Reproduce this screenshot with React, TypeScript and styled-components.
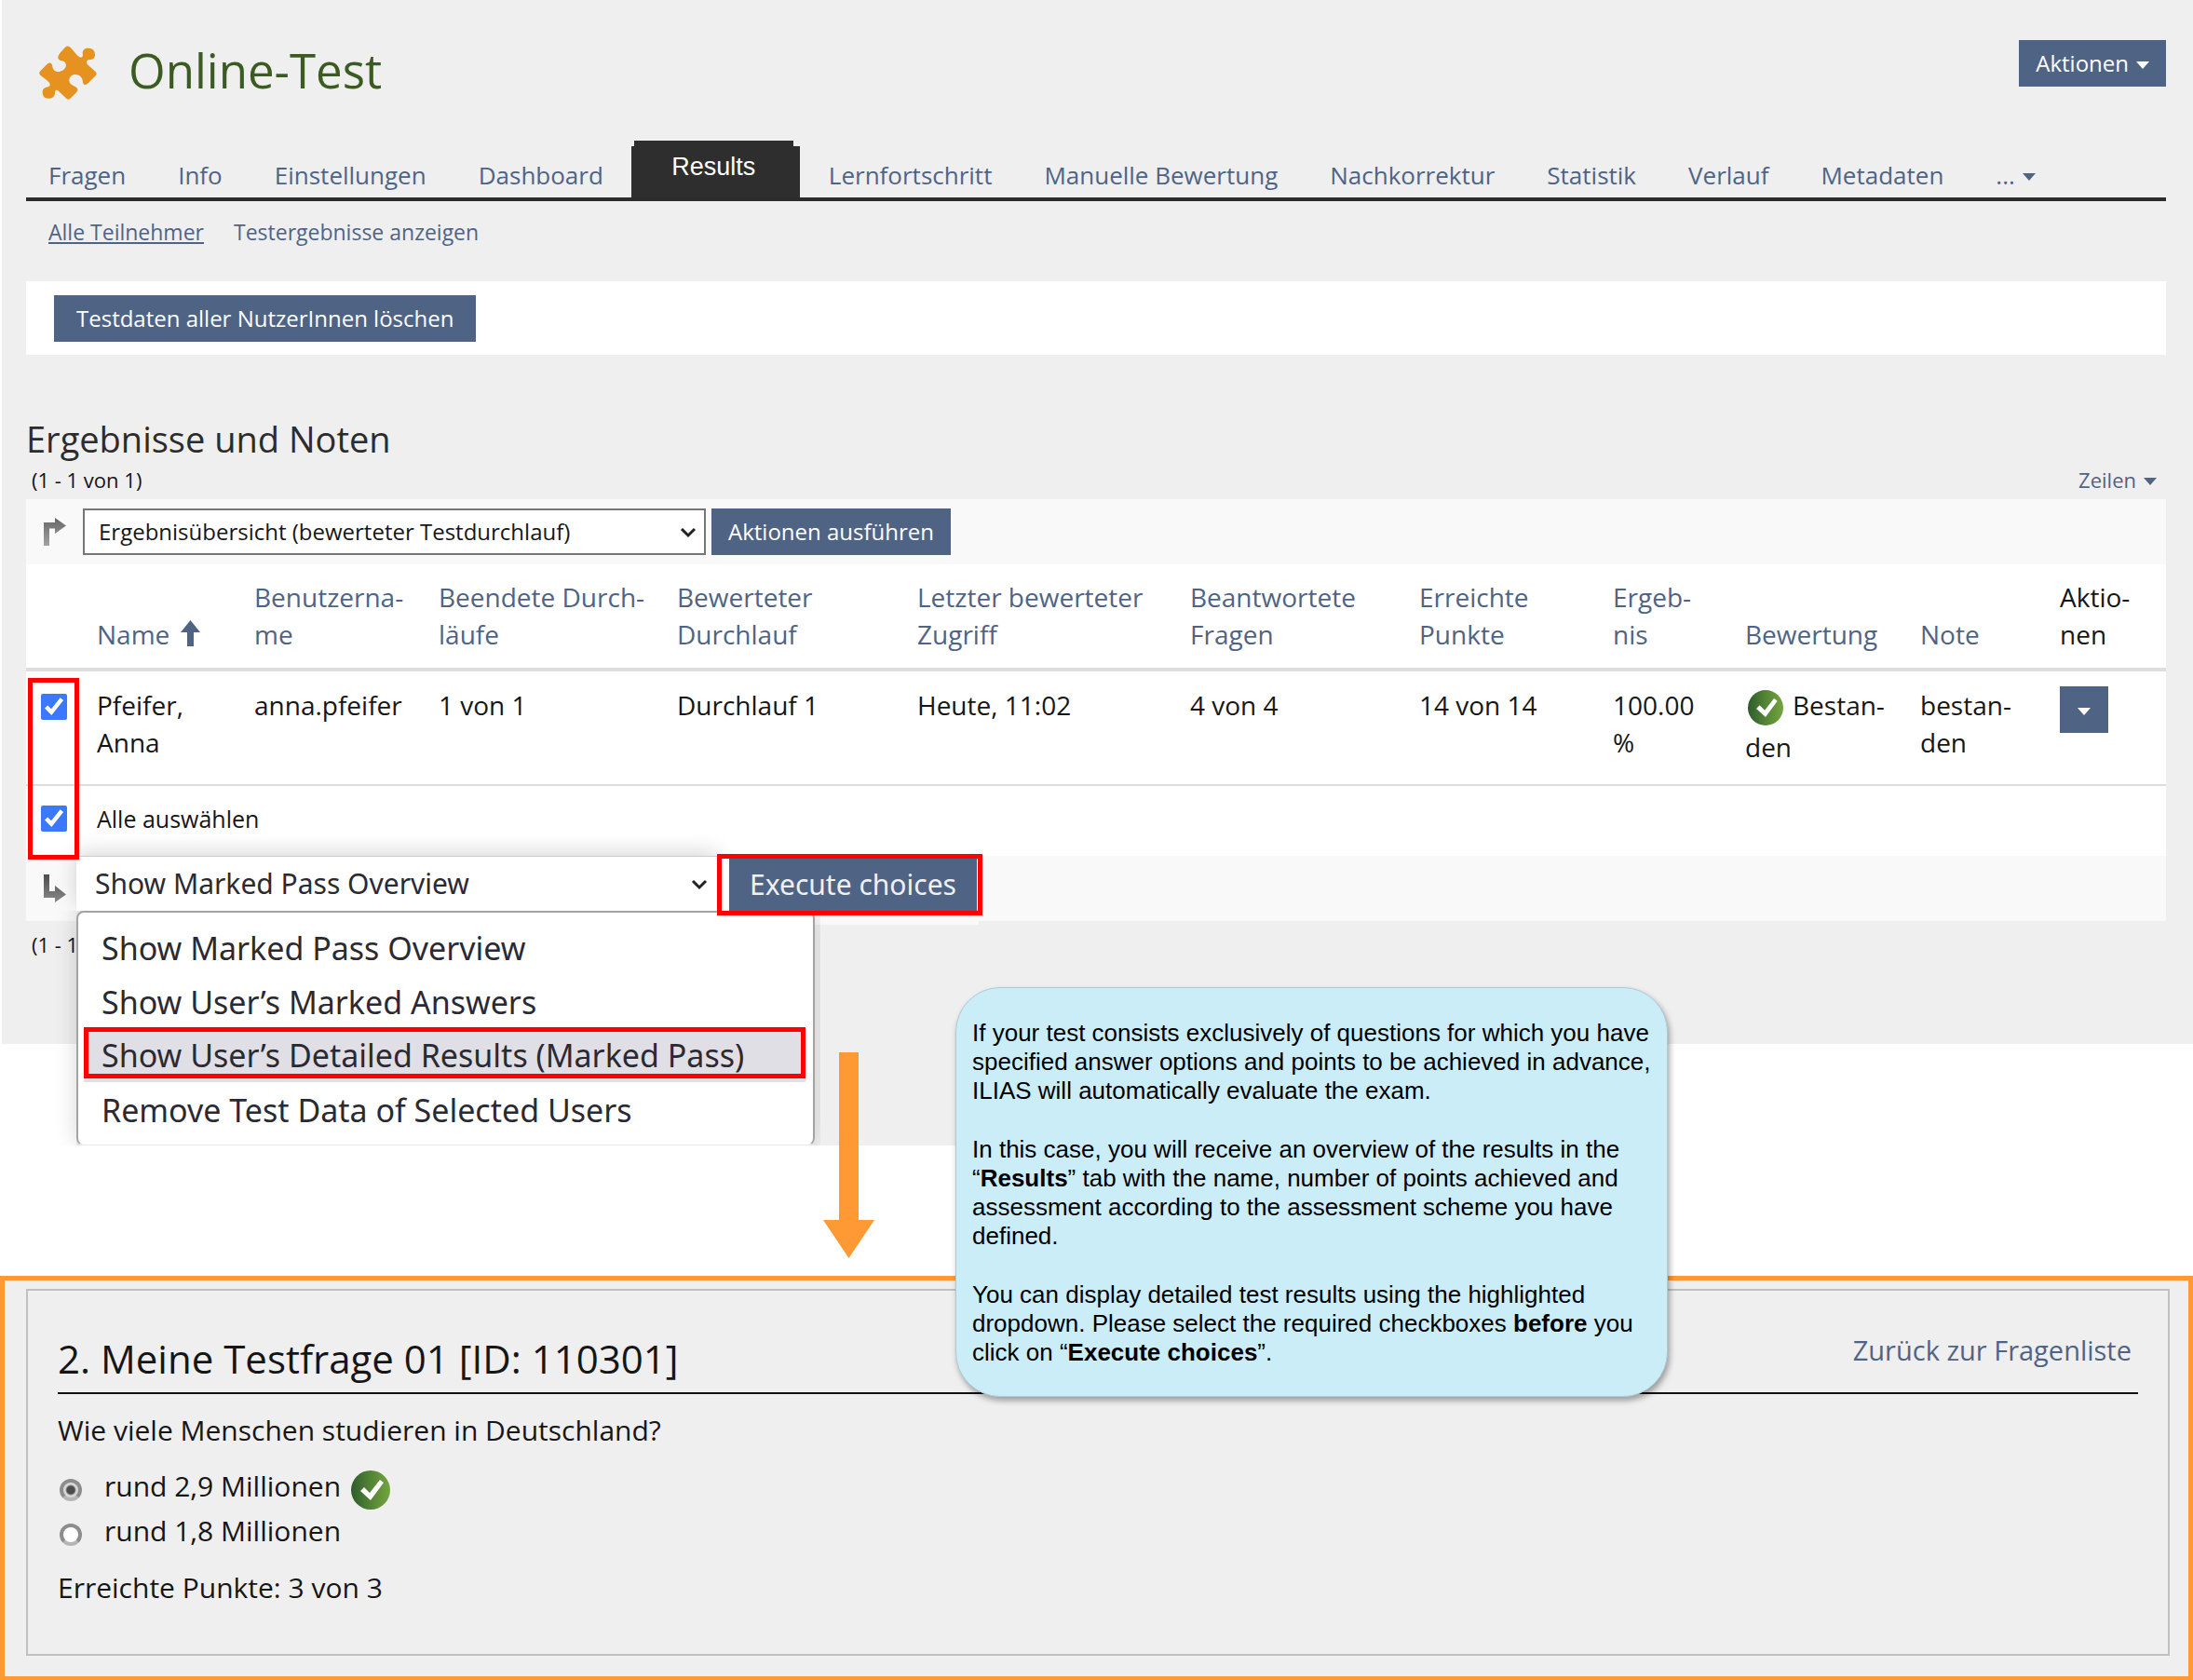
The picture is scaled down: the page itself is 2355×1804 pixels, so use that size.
import React from "react";
import styled, { createGlobalStyle } from "styled-components";

const link = "#4f6485";
const sans = `"Open Sans", "Noto Sans", sans-serif`;
const arial = `"Liberation Sans", Arial, sans-serif`;

const GlobalStyle = createGlobalStyle`
  *, *::before, *::after { box-sizing: border-box; }
  body { margin: 0; background: #fff; color: #161616; font-family: ${sans}; font-size: 28px; line-height: 40px; }
  button, select, input { font: inherit; margin: 0; }
  a { color: ${link}; text-decoration: none; }
`;

const Page = styled.div`
  position: relative;
`;

const Panel = styled.main`
  margin: 0 0 249px 2px;
  padding: 0 29px 91px 26px;
  background: #efefef;
`;

const Header = styled.header`
  display: flex;
  align-items: flex-start;
  height: 151px;
  padding-top: 39px;
`;

const PuzzleIcon = styled.svg`
  width: 62px;
  height: 58px;
  margin: 10px 34px 0 14px;
`;

const Title = styled.h1`
  margin: 0;
  flex: 1;
  font-size: 51px;
  line-height: 72px;
  font-weight: 400;
  color: #3c5b22;
`;

const Button = styled.button<{ $pad?: number }>`
  display: inline-flex;
  align-items: center;
  justify-content: center;
  gap: 8px;
  height: 50px;
  padding: 0 ${(p) => p.$pad ?? 18}px;
  border: 0;
  background: ${link};
  color: #fff;
  font-size: 24px;
  line-height: 34px;
  white-space: nowrap;
`;

const HeaderButton = styled(Button)`
  margin-top: 4px;
`;

const Caret = styled.span`
  display: inline-block;
  margin-top: 3px;
  border: 7px solid transparent;
  border-top: 8px solid currentColor;
  border-bottom: 0;
`;

const Tabs = styled.nav`
  display: flex;
  align-items: flex-end;
  height: 65px;
  padding-left: 24px;
  border-bottom: 4px solid #2c2c2d;
`;

const Tab = styled.a`
  display: inline-flex;
  align-items: center;
  gap: 8px;
  margin-right: 56px;
  padding-bottom: 4px;
  font-size: 26px;
  white-space: nowrap;
`;

const ActiveTab = styled.a`
  position: relative;
  width: 181px;
  height: 55px;
  margin: 0 31px 0 -26px;
  padding-right: 4px;
  background: #2e2e2e;
  color: #fff;
  font-family: ${arial};
  font-size: 27px;
  line-height: 44px;
  text-align: center;
  &::before {
    content: "";
    position: absolute;
    left: 3px;
    right: 7px;
    top: -6px;
    height: 6px;
    background: #2e2e2e;
  }
`;

const SubTabs = styled.nav`
  display: flex;
  gap: 32px;
  padding: 16px 24px 0;
  height: 86px;
  font-size: 23px;
  line-height: 34px;
`;

const SubTab = styled.a<{ $active?: boolean }>`
  text-decoration: ${(p) => (p.$active ? "underline" : "none")};
`;

const Toolbar = styled.div`
  padding: 15px 30px 14px;
  background: #fff;
  line-height: 0;
`;

const Heading = styled.h2`
  margin: 64px 0 0;
  font-size: 38px;
  line-height: 52px;
  font-weight: 400;
  color: #2c2c2c;
`;

const CountRow = styled.div<{ $below?: boolean }>`
  display: flex;
  justify-content: space-between;
  padding: ${(p) => (p.$below ? "9px 10px 0 6px" : "2px 10px 5px 6px")};
  font-size: 22px;
  line-height: 32px;
`;

const RowsLink = styled.a`
  display: inline-flex;
  align-items: center;
  gap: 8px;
`;

const ActionBar = styled.div`
  position: relative;
  display: flex;
  align-items: center;
  height: 70px;
  padding-left: 19px;
  background: #f9f9f9;
`;

const TurnIcon = styled.svg`
  width: 24px;
  height: 30px;
  margin-right: 18px;
`;

const SelectBox = styled.div`
  position: relative;
  display: flex;
  width: 669px;
  margin-right: 6px;
`;

const Select = styled.select`
  width: 100%;
  height: 50px;
  padding: 0 40px 0 15px;
  appearance: none;
  border: 2px solid #767676;
  border-radius: 0;
  background: #fff;
  color: #161616;
  font-size: 24px;
`;

const Chevron = styled.svg<{ $right: number }>`
  position: absolute;
  right: ${(p) => p.$right}px;
  top: 50%;
  width: 18px;
  height: 12px;
  margin-top: -5px;
  pointer-events: none;
`;

const TableBox = styled.div`
  position: relative;
  background: #fff;
`;

const Table = styled.table`
  width: 100%;
  table-layout: fixed;
  border-spacing: 0;
  text-align: left;
  white-space: pre-line;
`;

const Th = styled.th`
  padding: 15px 0 16px 12px;
  border-bottom: 4px solid #ddd;
  font-weight: 400;
  vertical-align: bottom;
`;

const Td = styled.td`
  padding: 16px 0 20px 12px;
  border-bottom: 2px solid #ddd;
  vertical-align: top;
`;

const CheckTd = styled(Td)`
  padding: 24px 0 0 16px;
  line-height: 0;
`;

const AllTd = styled.td<{ $check?: boolean }>`
  padding: ${(p) => (p.$check ? "21px 0 0 16px" : "15px 0 20px 12px")};
  font-size: 25px;
  line-height: ${(p) => (p.$check ? "0" : "40px")};
  vertical-align: top;
`;

const Checkbox = styled.input`
  width: 28px;
  height: 28px;
  accent-color: #3b78fd;
`;

const SortIcon = styled.svg`
  width: 21px;
  height: 28px;
  margin-left: 12px;
  vertical-align: -2px;
`;

const Passed = styled.svg<{ $size: number }>`
  width: ${(p) => p.$size}px;
  height: ${(p) => p.$size}px;
  flex: none;
`;

const PassedInline = styled.span`
  display: inline-block;
  height: 41px;
  margin: 0 10px 0 3px;
  vertical-align: -11px;
  line-height: 0;
`;

const RowButton = styled(Button)`
  display: flex;
  width: 52px;
  padding: 0;
`;

const Frame = styled.div`
  position: absolute;
  left: 2px;
  top: 122px;
  z-index: 2;
  width: 55px;
  height: 195px;
  border: 5px solid #f00;
  pointer-events: none;
`;

const Popup = styled.div`
  position: absolute;
  left: 54px;
  top: 0;
  z-index: 1;
  width: 969px;
  height: 311px;
  background: linear-gradient(#f9f9f9 74px, #efefef 74px);
  font-family: "Noto Sans", "Open Sans", sans-serif;
  color: #2b2a33;
`;

const PopupBar = styled.div`
  display: flex;
  align-items: flex-start;
  height: 59px;
`;

const PopupSelectBox = styled.div`
  position: relative;
  display: flex;
  flex: none;
  width: 688px;
  box-shadow: 0 -4px 22px rgba(0, 0, 0, 0.16);
`;

const PopupSelect = styled(Select)`
  height: 59px;
  padding: 0 40px 0 20px;
  border: 0;
  border-top: 1px solid #ccc;
  color: #2b2a33;
  font-size: 30px;
`;

const ButtonFrame = styled.div`
  position: relative;
  z-index: 1;
  flex: none;
  margin-top: -2px;
  padding: 0 1px 0 8px;
  border: 5px solid #f00;
  background: #fff;
`;

const ExecuteButton = styled(Button)`
  width: 266px;
  height: 56px;
  padding-bottom: 1px;
  color: #eef0f4;
  font-size: 30px;
`;

const Menu = styled.ul`
  width: 793px;
  height: 252px;
  margin: 0;
  padding: 7px 8px 0 6px;
  list-style: none;
  background: #fff;
  border: 2px solid #a3a3a3;
  border-bottom: 1px solid #e8e8e8;
  border-radius: 8px;
  box-shadow: 0 0 24px rgba(0, 0, 0, 0.16);
  clip-path: inset(0 -6px 0 -30px);
`;

const Option = styled.li<{ $marked?: boolean }>`
  height: ${(p) => (p.$marked ? 55 : 58)}px;
  margin-bottom: ${(p) => (p.$marked ? 3 : 0)}px;
  padding: ${(p) => (p.$marked ? "4px 0 0 14px" : "2px 0 0 19px")};
  border: ${(p) => (p.$marked ? "5px solid #f00" : "0")};
  background: ${(p) => (p.$marked ? "#e0dfe6" : "transparent")};
  box-shadow: ${(p) => (p.$marked ? "0 4px 0 #e0dfe6" : "none")};
  font-size: 34px;
  line-height: ${(p) => (p.$marked ? 43 : 58)}px;
  white-space: nowrap;
`;

const DownArrow = styled.svg`
  position: absolute;
  left: 884px;
  top: 1130px;
  z-index: 2;
  width: 55px;
  height: 221px;
`;

const Callout = styled.aside`
  position: absolute;
  left: 1026px;
  top: 1060px;
  z-index: 3;
  width: 765px;
  padding: 33px 10px 31px 17px;
  border: 1px solid #aecbd5;
  border-radius: 48px;
  background: #cbedf8;
  box-shadow: 2px 4px 6px rgba(0, 0, 0, 0.35);
  color: #000;
  font-family: ${arial};
  font-size: 26px;
  line-height: 31px;
  p { margin: 0; }
  p + p { margin-top: 32px; }
`;

const Result = styled.section`
  padding: 9px 20px 22px 23px;
  border: 5px solid #f93;
  background: #efefef;
`;

const ResultBox = styled.div`
  padding: 43px 32px 51px;
  border: 2px solid #c0c0c0;
  font-size: 30px;
`;

const ResultHead = styled.div`
  display: flex;
  justify-content: space-between;
  align-items: flex-start;
  padding-right: 7px;
  margin-bottom: 19px;
  border-bottom: 2px solid #111;
`;

const BackLink = styled.a`
  font-size: 29px;
  line-height: 42px;
`;

const ResultTitle = styled.h2`
  margin: 0;
  padding: 2px 0 8px;
  font-size: 42px;
  line-height: 56px;
  font-weight: 400;
`;

const Text = styled.p`
  margin: 0;
`;

const Answers = styled.div`
  padding: 20px 0 13px;
`;

const Answer = styled.label`
  display: flex;
  align-items: flex-start;
  height: 48px;
  padding-left: 2px;
  svg { margin: 3px 0 0 11px; }
`;

const Radio = styled.input`
  appearance: none;
  width: 24px;
  height: 24px;
  margin: 12px 24px 0 0;
  border: 4px solid #8d8d8d;
  border-bottom-color: #b5b5b5;
  border-radius: 50%;
  background: #fff;
  &:checked {
    background: radial-gradient(circle, #4c4c4c 4px, #d8d8d8 6px);
  }
`;

function Check({ size }: { size: number }) {
  const id = `pass-${size}`;
  return (
    <Passed $size={size} viewBox="0 0 42 42" role="img" aria-label="Bestanden">
      <defs>
        <linearGradient id={id}>
          <stop offset="0" stopColor="#2d5c2d" />
          <stop offset="0.5" stopColor="#548435" />
          <stop offset="1" stopColor="#74a53f" />
        </linearGradient>
      </defs>
      <circle cx="21" cy="21" r="21" fill={`url(#${id})`} />
      <path d="M10 22L14 18L20 24L31 10L35 13L21 32Z" fill="#fff" />
    </Passed>
  );
}

function TurnArrow({ down }: { down?: boolean }) {
  const id = down ? "turn-down" : "turn-up";
  return (
    <TurnIcon viewBox="0 0 24 30" aria-hidden="true">
      <defs>
        <linearGradient id={id} x2="0" y2="1">
          <stop offset="0" stopColor={down ? "#4d4d4d" : "#666"} />
          <stop offset="1" stopColor={down ? "#8a8a8a" : "#a3a3a3"} />
        </linearGradient>
      </defs>
      <path
        fill={`url(#${id})`}
        d={
          down
            ? "M0 0H6V18H12V12L24 21.5L12 30V25H0Z"
            : "M0 30V5H12V0L24 8.5L12 17V11.5H6V30Z"
        }
      />
    </TurnIcon>
  );
}

function ChevronDown({ right }: { right: number }) {
  return (
    <Chevron $right={right} viewBox="0 0 18 12" aria-hidden="true">
      <path d="M2 2L9 9L16 2" fill="none" stroke="#222" strokeWidth="3" />
    </Chevron>
  );
}

const columns = [
  { width: 64, label: "" },
  { width: 169, label: "Name", sorted: true },
  { width: 198, label: "Benutzerna-\nme" },
  { width: 256, label: "Beendete Durch-\nläufe" },
  { width: 258, label: "Bewerteter\nDurchlauf" },
  { width: 293, label: "Letzter bewerteter\nZugriff" },
  { width: 246, label: "Beantwortete\nFragen" },
  { width: 208, label: "Erreichte\nPunkte" },
  { width: 142, label: "Ergeb-\nnis" },
  { width: 188, label: "Bewertung" },
  { width: 150, label: "Note" },
  { width: 126, label: "Aktio-\nnen", plain: true },
];

const cells = [
  "Pfeifer,\nAnna",
  "anna.pfeifer",
  "1 von 1",
  "Durchlauf 1",
  "Heute, 11:02",
  "4 von 4",
  "14 von 14",
  "100.00\n%",
];

const options = [
  "Show Marked Pass Overview",
  "Show User’s Marked Answers",
  "Show User’s Detailed Results (Marked Pass)",
  "Remove Test Data of Selected Users",
];

export default function App() {
  return (
    <Page>
      <GlobalStyle />
      <Panel>
        <Header>
          <PuzzleIcon viewBox="36 26 186 174" aria-hidden="true">
            <path
              fill="#e69220"
              d="M120 31Q128 23 137 32L160 58Q173 70 177 58C174 42 180 34 194 34C210 34 217 44 216 58C214 70 204 71 196 72C187 74 187 82 195 90L218 110Q224 117 218 123L192 149Q180 157 177 145C177 128 166 117 150 119C135 121 128 137 137 149C144 157 162 158 160 170Q158 176 150 183L138 195Q130 203 122 195L100 174C92 166 87 169 87 178C87 190 78 196 66 196C53 196 46 188 47 174C48 160 60 161 68 157C74 153 70 146 64 140L40 121Q33 115 40 108L62 85Q74 76 78 88C79 104 89 113 103 109C120 105 128 90 119 79C113 72 96 77 97 63Q98 56 105 48Z"
            />
          </PuzzleIcon>
          <Title>Online-Test</Title>
          <HeaderButton type="button">
            Aktionen <Caret />
          </HeaderButton>
        </Header>
        <Tabs>
          <Tab href="#">Fragen</Tab>
          <Tab href="#">Info</Tab>
          <Tab href="#">Einstellungen</Tab>
          <Tab href="#">Dashboard</Tab>
          <ActiveTab href="#">Results</ActiveTab>
          <Tab href="#">Lernfortschritt</Tab>
          <Tab href="#">Manuelle Bewertung</Tab>
          <Tab href="#">Nachkorrektur</Tab>
          <Tab href="#">Statistik</Tab>
          <Tab href="#">Verlauf</Tab>
          <Tab href="#">Metadaten</Tab>
          <Tab href="#">
            ... <Caret />
          </Tab>
        </Tabs>
        <SubTabs>
          <SubTab href="#" $active>
            Alle Teilnehmer
          </SubTab>
          <SubTab href="#">Testergebnisse anzeigen</SubTab>
        </SubTabs>
        <Toolbar>
          <Button type="button" $pad={24}>
            Testdaten aller NutzerInnen löschen
          </Button>
        </Toolbar>

        <Heading>Ergebnisse und Noten</Heading>
        <CountRow>
          <span>(1 - 1 von 1)</span>
          <RowsLink href="#">
            Zeilen <Caret />
          </RowsLink>
        </CountRow>
        <ActionBar>
          <TurnArrow />
          <SelectBox>
            <Select aria-label="Aktion">
              <option>Ergebnisübersicht (bewerteter Testdurchlauf)</option>
            </Select>
            <ChevronDown right={10} />
          </SelectBox>
          <Button type="button">Aktionen ausführen</Button>
        </ActionBar>
        <TableBox>
          <Table>
            <colgroup>
              {columns.map((c, i) => (
                <col key={i} width={c.width} />
              ))}
            </colgroup>
            <thead>
              <tr>
                {columns.map((c, i) => (
                  <Th key={i} scope="col">
                    {c.plain ? c.label : c.label && <a href="#">{c.label}</a>}
                    {c.sorted && (
                      <SortIcon viewBox="0 0 21 28" aria-hidden="true">
                        <path d="M10.5 0L21 13H14V28H7V13H0Z" fill={link} />
                      </SortIcon>
                    )}
                  </Th>
                ))}
              </tr>
            </thead>
            <tbody>
              <tr>
                <CheckTd>
                  <Checkbox type="checkbox" defaultChecked aria-label="Pfeifer, Anna" />
                </CheckTd>
                {cells.map((c) => (
                  <Td key={c}>{c}</Td>
                ))}
                <Td>
                  <PassedInline>
                    <Check size={38} />
                  </PassedInline>
                  {"Bestan-\nden"}
                </Td>
                <Td>{"bestan-\nden"}</Td>
                <Td>
                  <RowButton type="button" aria-label="Aktionen">
                    <Caret />
                  </RowButton>
                </Td>
              </tr>
              <tr>
                <AllTd $check>
                  <Checkbox type="checkbox" id="all" defaultChecked />
                </AllTd>
                <AllTd colSpan={11}>
                  <label htmlFor="all">Alle auswählen</label>
                </AllTd>
              </tr>
            </tbody>
          </Table>
          <Frame />
        </TableBox>
        <ActionBar>
          <TurnArrow down />
          <Popup>
            <PopupBar>
              <PopupSelectBox>
                <PopupSelect aria-label="Action">
                  {options.map((o) => (
                    <option key={o}>{o}</option>
                  ))}
                </PopupSelect>
                <ChevronDown right={10} />
              </PopupSelectBox>
              <ButtonFrame>
                <ExecuteButton type="button">Execute choices</ExecuteButton>
              </ButtonFrame>
            </PopupBar>
            <Menu role="listbox" aria-label="Action">
              {options.map((o, i) => (
                <Option key={o} role="option" aria-selected={i === 2} $marked={i === 2}>
                  {o}
                </Option>
              ))}
            </Menu>
          </Popup>
        </ActionBar>
        <CountRow $below>
          <span>(1 - 1 von 1)</span>
        </CountRow>
      </Panel>

      <Result>
        <ResultBox>
          <ResultHead>
            <ResultTitle>2. Meine Testfrage 01 [ID: 110301]</ResultTitle>
            <BackLink href="#">Zurück zur Fragenliste</BackLink>
          </ResultHead>
          <Text>Wie viele Menschen studieren in Deutschland?</Text>
          <Answers>
            <Answer>
              <Radio type="radio" name="answer" defaultChecked />
              rund 2,9 Millionen
              <Check size={42} />
            </Answer>
            <Answer>
              <Radio type="radio" name="answer" />
              rund 1,8 Millionen
            </Answer>
          </Answers>
          <Text>Erreichte Punkte: 3 von 3</Text>
        </ResultBox>
      </Result>

      <DownArrow viewBox="0 0 55 221" aria-hidden="true">
        <path d="M17 0H38V180H55L27.5 221L0 180H17Z" fill="#f93" />
      </DownArrow>
      <Callout>
        <p>
          If your test consists exclusively of questions for which you have specified answer
          options and points to be achieved in advance, ILIAS will automatically evaluate the exam.
        </p>
        <p>
          In this case, you will receive an overview of the results in the “<b>Results</b>” tab
          with the name, number of points achieved and assessment according to the assessment
          scheme you have defined.
        </p>
        <p>
          You can display detailed test results using the highlighted dropdown. Please select the
          required checkboxes <b>before</b> you click on “<b>Execute choices</b>”.
        </p>
      </Callout>
    </Page>
  );
}
